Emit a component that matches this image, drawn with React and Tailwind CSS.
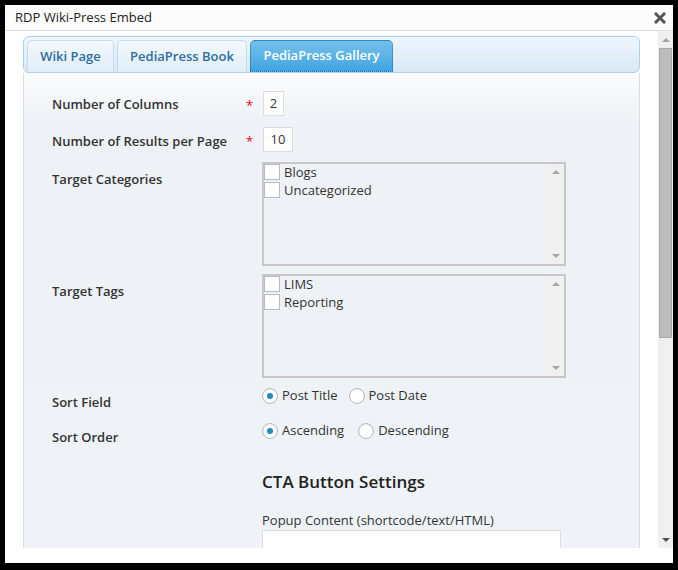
import React from "react";

const font = "font-['Open_Sans','Noto_Sans',sans-serif]";

const Checkbox = () => <span className="w-[16px] h-[16px] bg-white border border-[#bbb] shrink-0" />;

const Radio = ({ checked }) => (
	<span className="w-[16px] h-[16px] rounded-full bg-white border border-[#b4b9be] shadow-[inset_0_1px_2px_rgba(0,0,0,0.07)] flex items-center justify-center shrink-0">
		{checked && <span className="w-[6px] h-[6px] rounded-full bg-[#1e8cbe]" />}
	</span>
);

const ListBox = ({ items }) => (
	<div className="w-[304px] h-[104px] border-2 border-[#c8c8c8] flex">
		<div className="flex-1 flex flex-col gap-[2px]">
			{items.map((item) => (
				<label key={item} className="flex items-center gap-[4px] h-[16px] text-[13px] text-[#333]">
					<Checkbox />
					<span className="leading-none pt-[1px]">{item}</span>
				</label>
			))}
		</div>
		<div className="w-[17px] bg-[#f0f0f0] flex flex-col justify-between items-center py-[6px]">
			<span className="w-0 h-0 border-x-[4px] border-x-transparent border-b-[4px] border-b-[#a3a3a3]" />
			<span className="w-0 h-0 border-x-[4px] border-x-transparent border-t-[4px] border-t-[#a3a3a3]" />
		</div>
	</div>
);

const Row = ({ label, star, labelClass = "", children, className = "" }) => (
	<div className={`flex ${className}`}>
		<div className={`w-[194px] text-[13px] font-semibold text-[#333] ${labelClass}`}>{label}</div>
		<div className="w-[16px] text-red-600 text-[13px] leading-none pt-[8px]">{star ? "*" : ""}</div>
		<div>{children}</div>
	</div>
);

export default function App() {
	return (
		<div className={`w-[678px] h-[570px] bg-black pt-[5px] pl-[5px] pr-[5px] pb-[7px] ${font}`}>
			<div className="bg-white h-full flex flex-col">
				<div className="h-[26px] shrink-0 bg-[#fcfcfc] border-b border-[#dfdfdf] flex items-center justify-between pl-[10px] pr-[7px]">
					<span className="text-[13px] text-[#222]">RDP Wiki-Press Embed</span>
					<svg width="12" height="12" viewBox="0 0 12 12">
						<path d="M2 2 L10 10 M10 2 L2 10" stroke="#555" strokeWidth="3" strokeLinecap="square" />
					</svg>
				</div>
				<div className="flex h-[517px] shrink-0">
					<div className="flex-1 overflow-hidden pl-[18px] pr-[18px] pt-[5px]">
						<div className="h-[37px] rounded-[6px] border border-[#aed0ea] bg-[linear-gradient(to_bottom,#eef6fc,#d9e8f5)] flex items-end gap-[3px] pl-[3px]">
							<div className="w-[87px] h-[32px] rounded-t-[5px] border border-b-0 border-[#c5dbec] bg-[linear-gradient(to_bottom,#f3f8fd,#dfedf8)] flex items-center justify-center text-[13px] font-semibold text-[#2e6e9e]">
								Wiki Page
							</div>
							<div className="w-[130px] h-[32px] rounded-t-[5px] border border-b-0 border-[#c5dbec] bg-[linear-gradient(to_bottom,#f3f8fd,#dfedf8)] flex items-center justify-center text-[13px] font-semibold text-[#2e6e9e]">
								PediaPress Book
							</div>
							<div className="w-[143px] h-[32px] rounded-t-[5px] border border-dotted border-[#1d6fa8] bg-[linear-gradient(to_bottom,#72bfea,#5eb3e6_50%,#3ea3e2)] flex items-center justify-center text-[13px] font-semibold text-white">
								PediaPress Gallery
							</div>
						</div>
						<div className="h-[500px] border-x border-[#dcdcdc] bg-[linear-gradient(to_bottom,#fbfcfd_0px,#eef2f6_48px,#eff3f7_100%)] pl-[28px] pt-[18px]">
							<Row label="Number of Columns" star labelClass="pt-[4px]">
								<div className="ml-[1px] w-[21px] h-[25px] bg-white border border-[#ddd] flex items-center justify-center text-[13px] text-[#333]">2</div>
							</Row>
							<Row label="Number of Results per Page" star labelClass="pt-[5px]" className="mt-[11px]">
								<div className="ml-[1px] w-[30px] h-[25px] bg-white border border-[#ddd] flex items-center justify-center text-[13px] text-[#333]">10</div>
							</Row>
							<Row label="Target Categories" labelClass="pt-[8px]" className="mt-[10px]">
								<ListBox items={["Blogs", "Uncategorized"]} />
							</Row>
							<Row label="Target Tags" labelClass="pt-[8px]" className="mt-[8px]">
								<ListBox items={["LIMS", "Reporting"]} />
							</Row>
							<Row label="Sort Field" labelClass="pt-[8px]" className="mt-[7px]">
								<div className="flex items-center h-[20px] text-[13px] text-[#333] pt-[2px]">
									<Radio checked />
									<span className="ml-[4px] mr-[11px]">Post Title</span>
									<Radio />
									<span className="ml-[4px]">Post Date</span>
								</div>
							</Row>
							<Row label="Sort Order" labelClass="pt-[7px]" className="mt-[8px]">
								<div className="flex items-center h-[20px] text-[13px] text-[#333]">
									<Radio checked />
									<span className="ml-[4px] mr-[14px]">Ascending</span>
									<Radio />
									<span className="ml-[4px]">Descending</span>
								</div>
							</Row>
							<div className="pl-[210px] pt-[24px]">
								<div className="text-[17px] font-semibold text-[#222] leading-[22px]">CTA Button Settings</div>
								<div className="text-[13px] text-[#333] mt-[18px] leading-[18px]">Popup Content (shortcode/text/HTML)</div>
								<div className="w-[299px] h-[60px] bg-white border border-[#ddd] mt-[1px]" />
							</div>
						</div>
					</div>
					<div className="w-[15px] bg-[#f0f0f0] flex flex-col items-center">
						<div className="h-[17px] flex items-center justify-center">
							<span className="w-0 h-0 border-x-[4px] border-x-transparent border-b-[4px] border-b-[#a3a3a3]" />
						</div>
						<div className="w-[13px] h-[290px] bg-[#bcbcbc] border border-[#a8a8a8]" />
						<div className="flex-1" />
						<div className="h-[17px] flex items-center justify-center">
							<span className="w-0 h-0 border-x-[4px] border-x-transparent border-t-[4px] border-t-[#505050]" />
						</div>
					</div>
				</div>
				<div className="flex-1 bg-white" />
			</div>
		</div>
	);
}
